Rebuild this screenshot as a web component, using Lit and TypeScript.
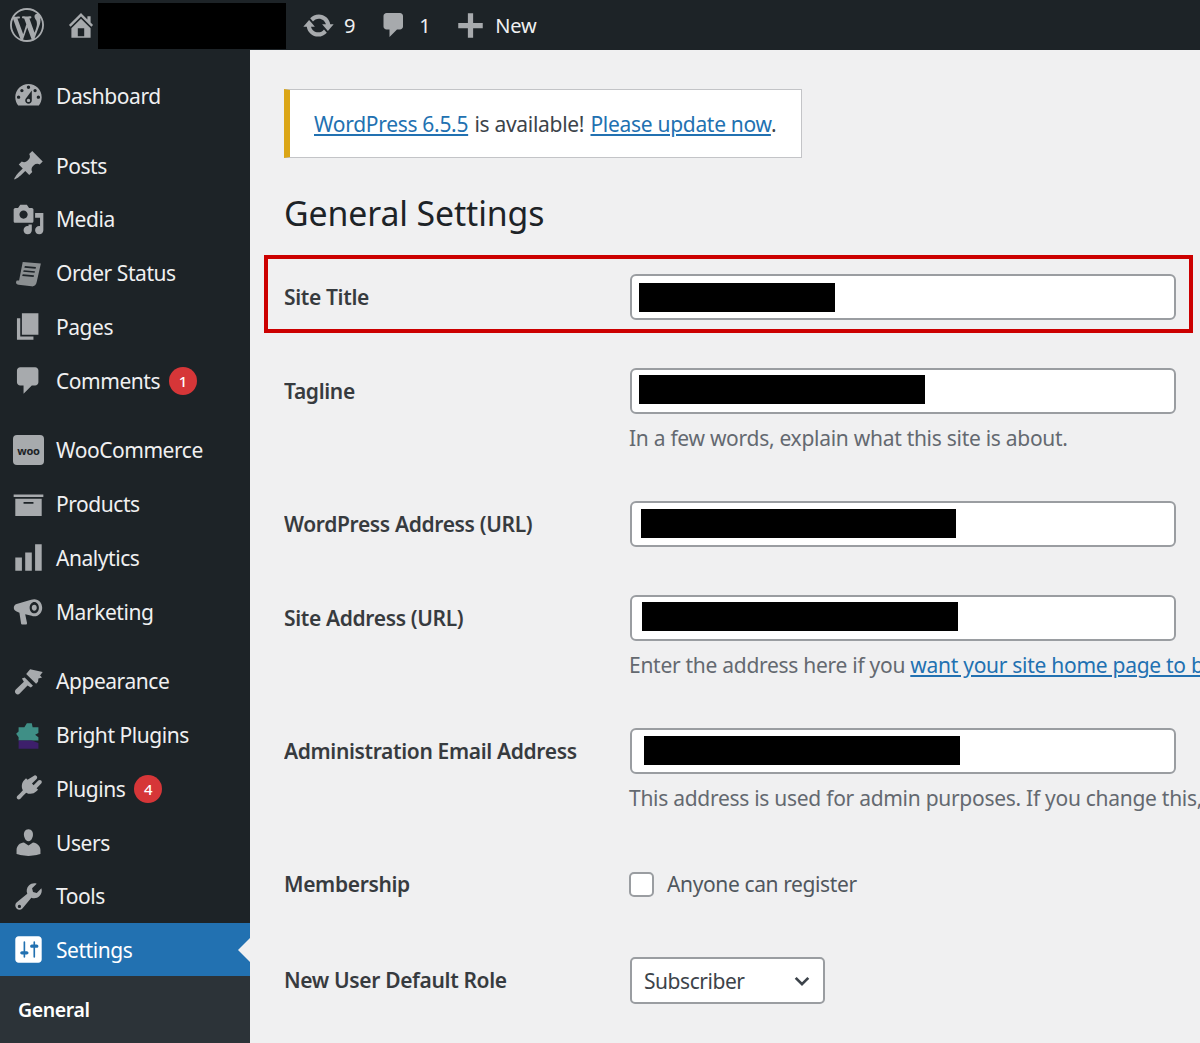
import { LitElement, html, css, svg } from "lit";
import { customElement } from "lit/decorators.js";

const P: Record<string, any> = {
  wp: svg`<path d="M20 10c0-5.51-4.49-10-10-10C4.480 0 0 4.490 0 10c0 5.520 4.480 10 10 10 5.510 0 10-4.480 10-10zM7.780 15.370L4.370 6.220c.550-.020 1.170-.080 1.170-.080.500-.060.440-1.130-.060-1.110 0 0-1.450.110-2.370.110-.180 0-.370 0-.580-.010C4.120 2.690 6.870 1.110 10 1.110c2.330 0 4.450.870 6.050 2.340-.680-.110-1.650.390-1.650 1.580 0 .740.450 1.360.900 2.100.350.610.550 1.360.550 2.460 0 1.490-1.400 5-1.400 5l-3.030-8.370c.540-.020.820-.170.820-.170.500-.050.440-1.250-.060-1.220 0 0-1.440.120-2.380.120-.870 0-2.330-.120-2.330-.120-.500-.030-.560 1.200-.060 1.220l.920.080 1.260 3.410zM17.410 10c.240-.640.740-1.870.430-4.250.700 1.290 1.050 2.710 1.050 4.250 0 3.290-1.730 6.240-4.400 7.780.970-2.590 1.940-5.200 2.920-7.780zM6.100 18.090C3.120 16.650 1.110 13.530 1.110 10c0-1.300.230-2.480.720-3.590C3.250 10.300 4.670 14.200 6.100 18.090zm4.030-6.630l2.580 6.980c-.850.290-1.740.450-2.710.450-.790 0-1.570-.110-2.300-.330.810-2.380 1.620-4.740 2.430-7.100z" fill-rule="evenodd"/>`,
  home: svg`<path fill-rule="evenodd" d="M16 8.500l1.530 1.530-1.060 1.060L10 4.620l-6.470 6.470-1.060-1.060L10 2.500l4 4v-2h2v4zm-6-2.460l6 5.990V18H4v-5.970zM12 17v-5H8v5h4z"/>`,
  update: svg`<path d="M10.200 3.280c3.530 0 6.430 2.610 6.910 6h2.080l-3.500 4-3.500-4h2.320c-.450-1.970-2.210-3.440-4.310-3.440-1.450 0-2.730.710-3.540 1.790L4.950 5.650c1.270-1.450 3.130-2.370 5.250-2.370zm-.400 13.440c-3.520 0-6.430-2.610-6.910-6H.800l3.500-4c1.170 1.330 2.330 2.670 3.500 4H5.480c.450 1.970 2.210 3.440 4.310 3.440 1.450 0 2.730-.710 3.540-1.790l1.720 1.970c-1.250 1.450-3.110 2.380-5.250 2.380z"/>`,
  plus: svg`<path d="M17 8.500v3h-5.500V17h-3v-5.500H3v-3h5.500V3h3v5.500z"/>`,
  dashboard: svg`<path fill-rule="evenodd" d="M3.760 16h12.480c1.100-1.370 1.760-3.110 1.760-5 0-4.420-3.580-8-8-8s-8 3.580-8 8c0 1.890.660 3.630 1.760 5zM10 4c.550 0 1 .450 1 1s-.450 1-1 1-1-.450-1-1 .450-1 1-1zM6 6c.550 0 1 .450 1 1s-.450 1-1 1-1-.450-1-1 .450-1 1-1zm8 0c.550 0 1 .450 1 1s-.450 1-1 1-1-.450-1-1 .450-1 1-1zm-5.370 5.550L12 7v6c0 1.100-.900 2-2 2s-2-.900-2-2c0-.570.250-1.080.630-1.450zM4 10c.550 0 1 .450 1 1s-.450 1-1 1-1-.450-1-1 .450-1 1-1zm12 0c.550 0 1 .450 1 1s-.450 1-1 1-1-.450-1-1 .450-1 1-1zm-5 3c0-.550-.450-1-1-1s-1 .450-1 1 .450 1 1 1 1-.450 1-1z"/>`,
  pin: svg`<path d="M10.440 3.020l1.820-1.820 6.360 6.350-1.830 1.820c-1.050-.680-2.480-.570-3.410.360l-.750.750c-.920.930-1.040 2.350-.350 3.410l-1.830 1.820-2.410-2.410-2.800 2.790c-.420.420-3.380 2.710-3.800 2.290s1.860-3.390 2.280-3.810l2.790-2.790L4.100 9.360l1.830-1.820c1.050.690 2.480.570 3.400-.360l.750-.750c.930-.920 1.050-2.350.360-3.410z"/>`,
  media: svg`<path fill-rule="evenodd" d="M13 11V4c0-.550-.450-1-1-1h-1.670L9 1H5L3.670 3H2c-.550 0-1 .450-1 1v7c0 .550.450 1 1 1h10c.550 0 1-.450 1-1zM7 4.500c1.380 0 2.500 1.120 2.500 2.500S8.380 9.500 7 9.500 4.500 8.380 4.500 7 5.620 4.500 7 4.500zM14 6h5v10.500c0 1.380-1.120 2.500-2.500 2.500S14 17.880 14 16.500s1.120-2.500 2.500-2.500c.170 0 .340.020.500.050V9h-3V6zm-4 8.050V13h2v3.500c0 1.380-1.120 2.500-2.500 2.500S7 17.880 7 16.500 8.120 14 9.500 14c.170 0 .340.020.500.050z"/>`,
  status: svg`<path fill-rule="evenodd" opacity=".8" d="M6.500 3 L17.500 4 L15 15 C14.700 17 13.400 18 11.800 17.800 L4 16.800 C2.500 16.600 2 15.300 2.900 14.200 L4.300 14.300 Z M7.800 5.500 L7.500 6.500 L14.300 7.100 L14.500 6.100 Z M7.100 8 L6.800 9 L13.700 9.600 L13.900 8.600 Z M6.500 10.500 L6.200 11.500 L13.100 12.100 L13.300 11.100 Z"/>`,
  pages: svg`<path d="M6 15V2h10v13H6zm-1 1h8v2H3V5h2v11z"/>`,
  comment: svg`<path d="M5 2h9c1.100 0 2 .900 2 2v7c0 1.100-.900 2-2 2h-2l-5 5v-5H5c-1.100 0-2-.900-2-2V4c0-1.100.900-2 2-2z"/>`,
  products: svg`<path fill-rule="evenodd" d="M19 4v1.500H1V4h18zM2 6.500h16V17H2V6.500zm11 3V8.500H7v1h6z"/>`,
  analytics: svg`<path d="M18 18V2h-4v16h4zm-6 0V7H8v11h4zm-6 0v-8H2v8h4z"/>`,
  marketing: svg`<path fill-rule="evenodd" d="M13.500 2.500c2.800 0 4.800 2.400 4.800 5.200s-2 5.200-4.800 5.200c-.6 0-1.100-.1-1.600-.4L8 11.600l1.100 5.300c.1.500-.3 1-.8 1H6.300c-.4 0-.7-.3-.8-.7L4.500 10.700 2.800 10C1.700 9.500 1.100 8.700 1.100 7.700c0-1 .6-1.800 1.700-2.200l8.800-2.600c.6-.3 1.200-.4 1.900-.4zm0 1.800c-1.500 0-2.800 1.500-2.800 3.400s1.300 3.400 2.800 3.400 2.800-1.500 2.800-3.400-1.300-3.400-2.800-3.400zm0 1.600c.9 0 1.500.8 1.500 1.800s-.6 1.800-1.500 1.800S12 8.700 12 7.700s.6-1.800 1.500-1.800z"/>`,
  appearance: svg`<path d="M11 2.500l7.600 1.800-1.600 2.100 1.200 1.200-2.200.6-.2 2-1.200 1.200-6-6zM7.700 7.500l5 5-1.300 1.100-2-1.200-4.700 4.900c-.7.700-1.700.7-2.400 0-.7-.7-.7-1.700 0-2.400l4.900-4.700-1.200-2z"/>`,
  plugin: svg`<path d="M13.100 2.400c.5-.5 1.300-.5 1.800 0s.5 1.300 0 1.800l-2.800 2.800 1 1 2.800-2.800c.5-.5 1.300-.5 1.800 0s.5 1.300 0 1.800l-2.800 2.800.9.900-1 1c-1.700 1.700-4.200 2-6.200.8l-2 2-1.500 1.700c-.5.500-1.300.6-1.800.2s-.6-1.300-.1-1.800l1.600-1.600 1.800-2c-1.100-2-.8-4.500.9-6.200l1-1 .9.900z"/>`,
  users: svg`<path d="M10 9.250c-2.270 0-2.730-3.440-2.730-3.440C7 4.020 7.820 2 9.970 2c2.160 0 2.980 2.020 2.710 3.810 0 0-.410 3.440-2.680 3.440zm0 2.570L12.720 10c2.390 0 4.520 2.330 4.520 4.530v2.490s-3.650 1.130-7.240 1.130c-3.650 0-7.240-1.130-7.240-1.130v-2.490c0-2.250 1.940-4.480 4.470-4.480z"/>`,
  tools: svg`<path fill-rule="evenodd" d="M16.680 9.770c-1.340 1.340-3.300 1.670-4.950.99l-5.410 6.520c-.99.990-2.590.99-3.580 0s-.99-2.590 0-3.570l6.520-5.420c-.68-1.650-.35-3.610.99-4.950 1.280-1.280 3.120-1.640 4.730-1.100l-2.810 2.810.56 2.270 2.270.56 2.810-2.810c.54 1.610.18 3.450-1.130 4.700zM4.500 15a1 1 0 1 0 0 2 1 1 0 0 0 0-2z"/>`,
  settings: svg`<path fill-rule="evenodd" d="M18 16V4c0-1.100-.900-2-2-2H4c-1.100 0-2 .900-2 2v12c0 1.100.900 2 2 2h12c1.100 0 2-.900 2-2zM8 11h1c.550 0 1 .450 1 1s-.450 1-1 1H8v1.500c0 .280-.220.500-.500.500s-.500-.220-.500-.500V13H6c-.550 0-1-.450-1-1s.450-1 1-1h1V5.500c0-.280.220-.500.500-.500s.500.220.500.500V11zm5-2h-1c-.550 0-1-.450-1-1s.450-1 1-1h1V5.500c0-.280.220-.500.500-.500s.500.220.500.500V7h1c.550 0 1 .450 1 1s-.450 1-1 1h-1v5.500c0 .280-.220.500-.500.500s-.500-.220-.500-.500V9z"/>`,
  bright: svg`<path fill="#3f8f86" d="M9 2.500h3l.5 2.500h3.500v3.500l-2 1 2 1.500v2H4V11L2.500 9 4 7.500V5h3.500z"/><path fill="#3d1f6b" d="M4 13h8l4 1.500V18H4z"/>`,
};
const icon = (n: string, cls = "") => html`<svg class="ico ${cls}" viewBox="0 0 20 20" fill="currentColor" aria-hidden="true">${P[n]}</svg>`;

type Item = { n: string; t: string; badge?: string };
const groups: Item[][] = [
  [{ n: "dashboard", t: "Dashboard" }],
  [
    { n: "pin", t: "Posts" },
    { n: "media", t: "Media" },
    { n: "status", t: "Order Status" },
    { n: "pages", t: "Pages" },
    { n: "comment", t: "Comments", badge: "1" },
  ],
  [
    { n: "woo", t: "WooCommerce" },
    { n: "products", t: "Products" },
    { n: "analytics", t: "Analytics" },
    { n: "marketing", t: "Marketing" },
  ],
  [
    { n: "appearance", t: "Appearance" },
    { n: "bright", t: "Bright Plugins" },
    { n: "plugin", t: "Plugins", badge: "4" },
    { n: "users", t: "Users" },
    { n: "tools", t: "Tools" },
  ],
];

@customElement("app-root")
export class AppRoot extends LitElement {
  static styles = css`
    :host { display: flex; flex-direction: column; width: 1200px; height: 1043px; overflow: hidden; background: #f0f0f1;
      font-family: "Noto Sans", "Open Sans", sans-serif; font-size: 21px; }
    * { box-sizing: border-box; }
    .ico { display: block; flex: none; width: 33px; height: 33px; }
    .bar { height: 50px; flex: none; background: #1d2327; color: #a7aaad; display: flex; align-items: center; }
    .bar .txt { color: #f0f0f1; font-size: 20px; letter-spacing: -0.1px; }
    .wp { width: 34px; height: 34px; margin-left: 10px; }
    .home { width: 32px; height: 32px; margin-left: 21px; margin-right: 1px; }
    .redact { background: #000; }
    .site { width: 188px; height: 46px; margin-top: 2px; }
    .update { margin-left: 16px; width: 33px; height: 33px; }
    .cnt { margin-left: 9px; }
    .cmt { margin-left: 24px; width: 30px; height: 30px; }
    .one { margin-left: 10px; }
    .pls { margin-left: 22px; width: 35px; height: 35px; }
    .new { margin-left: 7.5px; }
    .body { flex: 1; display: flex; min-height: 0; }
    .side { width: 250px; flex: none; background: #1d2327; padding-top: 19px; display: flex; flex-direction: column; }
    .group { margin-bottom: 16.25px; }
    .row { height: 53.7px; display: flex; align-items: center; padding-left: 12px; gap: 11px; color: #a7aaad; }
    .lbl { color: #f0f0f1; font-size: 21px; letter-spacing: -0.45px; }
    .badge { width: 28px; height: 28px; border-radius: 50%; background: #d63638; color: #fff; font-size: 15px; font-weight: 500;
      display: flex; align-items: center; justify-content: center; margin-left: -2px; }
    .woo { width: 31px; height: 30px; flex: none; margin-left: 1px; margin-right: 1px; position: relative; background: #a7aaad; border-radius: 4px;
      color: #1d2327; font-size: 11px; font-weight: 700; display: flex; align-items: center; justify-content: center; letter-spacing: -0.3px; }
    .active { height: 53px; margin-top: -16.25px; background: #2271b1; position: relative; color: #fff; }
    .active .lbl { color: #fff; }
    .arrow { position: absolute; right: 0; top: 15px; width: 0; height: 0; border-style: solid;
      border-width: 12px 12px 12px 0; border-color: transparent #f0f0f1 transparent transparent; }
    .sub { flex: 1; background: #2c3338; padding: 17px 0 0 18px; color: #fff; font-weight: 600; font-size: 19.5px; letter-spacing: -0.4px; line-height: 34px; }
    .main { flex: 1; min-width: 0; overflow: hidden; padding: 39px 0 0 34px; color: #3c434a; }
    .notice { width: 518px; height: 69px; background: #fff; border: 1px solid #c3c4c7; border-left: 6px solid #dba617;
      display: flex; align-items: center; padding-left: 24px; font-size: 21px; letter-spacing: -0.3px; white-space: nowrap; gap: 0.3em; }
    a { color: #2271b1; text-decoration: underline; }
    h1 { margin: 30px 0 36px 0; font-size: 33.8px; line-height: 50px; font-weight: 400; color: #1d2327; letter-spacing: -0.1px; }
    .f { display: grid; grid-template-columns: 345px 546px; margin: 0 0 48px 1px; position: relative; }
    .f label { line-height: 46px; font-weight: 600; color: #1d2327; font-size: 21px; letter-spacing: -0.35px; opacity: 0.88; margin-left: -1px; }
    .input { height: 46px; background: #fff; border: 2px solid #9a9da1; border-radius: 6px; display: flex; align-items: center; }
    .input div { height: 29px; }
    .desc { grid-column: 2; margin-top: 9px; margin-left: -1px; line-height: 30px; color: #646970; white-space: nowrap; font-size: 21px; letter-spacing: -0.28px; }
    .hl { position: absolute; left: -21px; top: -19px; width: 929px; height: 78px; border: 4px solid #c00; pointer-events: none; }
    .chk { display: flex; align-items: center; gap: 13px; height: 46px; color: #50575e; font-size: 21px; letter-spacing: -0.38px; margin-left: -1px; }
    .box { width: 25px; height: 25px; background: #fff; border: 2px solid #9a9da1; border-radius: 5px; }
    .f.m { height: 48px; }
    .sel { width: 195px; height: 47px; background: #fff; border: 2px solid #9a9da1; border-radius: 5px; display: flex; align-items: center;
      justify-content: space-between; padding: 0 12px; color: #3c434a; font-size: 21px; letter-spacing: -0.45px; }
    .sel svg { width: 18px; height: 18px; }
  `;

  private item(i: Item) {
    return html`<div class="row">
      ${i.n === "woo" ? html`<span class="woo">woo</span>` : icon(i.n)}
      <span class="lbl">${i.t}</span>
      ${i.badge ? html`<span class="badge">${i.badge}</span>` : ""}
    </div>`;
  }

  private field(label: string, w: number, off: number, dy: number, desc?: unknown, hl = false) {
    return html`<div class="f">
      <label>${label}</label>
      <div class="input"><div class="redact" style="margin-left:${off}px;width:${w}px;margin-top:${dy}px"></div></div>
      ${desc ? html`<div class="desc">${desc}</div>` : ""}
      ${hl ? html`<div class="hl"></div>` : ""}
    </div>`;
  }

  render() {
    return html`
      <div class="bar">
        ${icon("wp", "wp")}${icon("home", "home")}
        <div class="redact site"></div>
        ${icon("update", "update")}<span class="txt cnt">9</span>
        ${icon("comment", "cmt")}<span class="txt one">1</span>
        ${icon("plus", "pls")}<span class="txt new">New</span>
      </div>
      <div class="body">
        <nav class="side">
          ${groups.map((g) => html`<div class="group">${g.map((i) => this.item(i))}</div>`)}
          <div class="row active">${icon("settings")}<span class="lbl">Settings</span><span class="arrow"></span></div>
          <div class="sub">General</div>
        </nav>
        <main class="main">
          <div class="notice"><a>WordPress 6.5.5</a><span>is available!</span><span><a>Please update now</a>.</span></div>
          <h1>General Settings</h1>
          ${this.field("Site Title", 196, 7, 0, undefined, true)}
          ${this.field("Tagline", 286, 7, -4, "In a few words, explain what this site is about.")}
          ${this.field("WordPress Address (URL)", 315, 9, -2)}
          ${this.field("Site Address (URL)", 316, 10, -4, html`Enter the address here if you <a>want your site home page to be different from your WordPress installation directory</a>.`)}
          ${this.field("Administration Email Address", 316, 12, -2, "This address is used for admin purposes. If you change this, an email will be sent to your new address to confirm it.")}
          <div class="f m"><label>Membership</label><div class="chk"><span class="box"></span>Anyone can register</div></div>
          <div class="f"><label>New User Default Role</label>
            <div class="sel">Subscriber<svg viewBox="0 0 20 20" fill="none" stroke="#3c434a" stroke-width="3"><path d="M3 6.500l7 7 7-7"/></svg></div>
          </div>
        </main>
      </div>
    `;
  }
}
